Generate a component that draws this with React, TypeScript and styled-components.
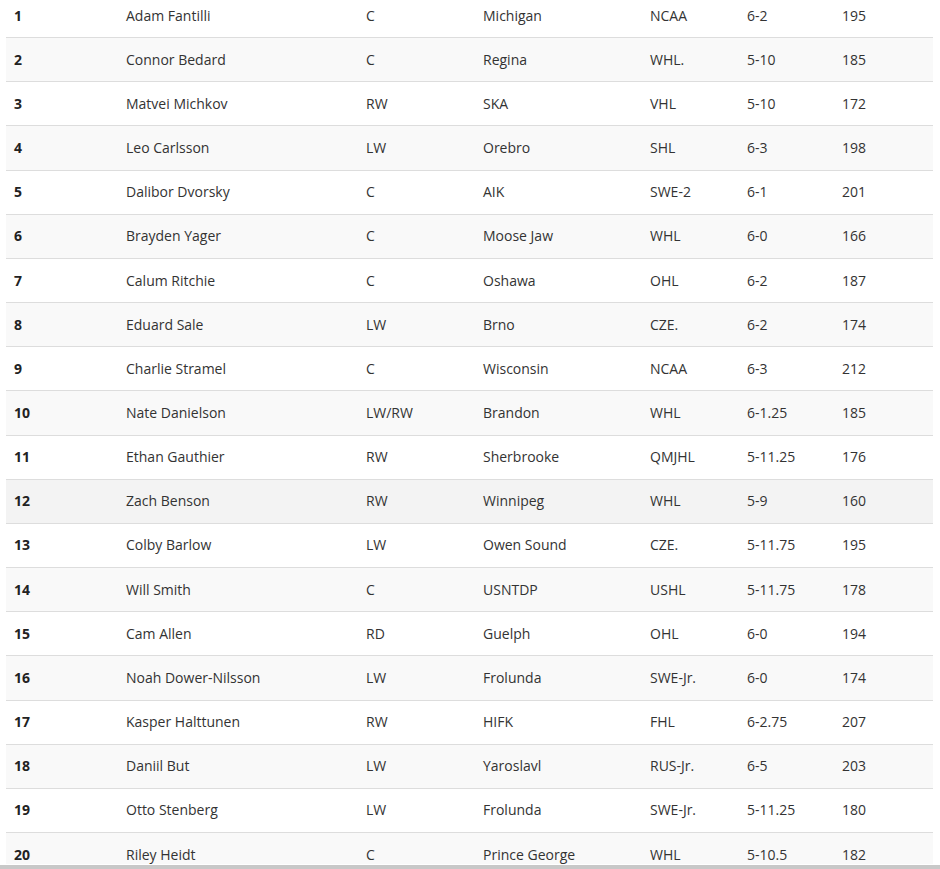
import styled, { createGlobalStyle } from 'styled-components';

const GlobalStyle = createGlobalStyle`
	html, body {
		margin: 0;
		padding: 0;
		background: #fff;
		overflow: hidden;
	}
	body {
		font-family: "Open Sans", "Liberation Sans", sans-serif;
		font-size: 14px;
		color: #333;
	}
`;

const Page = styled.div`
	height: 100vh;
	display: flex;
	flex-direction: column;
`;

const Viewport = styled.div`
	flex: 1;
	overflow: hidden;
	padding-left: 6px;
`;

const Table = styled.div`
	width: 927px;
	margin-top: -7px;
`;

const Row = styled.div<{ $striped: boolean; $hover?: boolean }>`
	display: grid;
	grid-template-columns: 112px 240px 117px 167px 97px 95px 99px;
	height: 44.16px;
	box-sizing: border-box;
	border-top: 1px solid #ddd;
	align-items: center;
	background: ${({ $striped, $hover }) => ($hover ? '#f3f3f3' : $striped ? '#f9f9f9' : '#fff')};
`;

const Cell = styled.div<{ $bold?: boolean }>`
	padding: 0 8px;
	line-height: 20px;
	white-space: nowrap;
	font-weight: ${({ $bold }) => ($bold ? 700 : 400)};
	color: ${({ $bold }) => ($bold ? '#222' : '#333')};
`;

const BottomBar = styled.div`
	height: 4px;
	border-top: 1px solid #fff;
	background: #c8c8c8;
	flex-shrink: 0;
`;

const players: [string, string, string, string, string, string][] = [
	['Adam Fantilli', 'C', 'Michigan', 'NCAA', '6-2', '195'],
	['Connor Bedard', 'C', 'Regina', 'WHL.', '5-10', '185'],
	['Matvei Michkov', 'RW', 'SKA', 'VHL', '5-10', '172'],
	['Leo Carlsson', 'LW', 'Orebro', 'SHL', '6-3', '198'],
	['Dalibor Dvorsky', 'C', 'AIK', 'SWE-2', '6-1', '201'],
	['Brayden Yager', 'C', 'Moose Jaw', 'WHL', '6-0', '166'],
	['Calum Ritchie', 'C', 'Oshawa', 'OHL', '6-2', '187'],
	['Eduard Sale', 'LW', 'Brno', 'CZE.', '6-2', '174'],
	['Charlie Stramel', 'C', 'Wisconsin', 'NCAA', '6-3', '212'],
	['Nate Danielson', 'LW/RW', 'Brandon', 'WHL', '6-1.25', '185'],
	['Ethan Gauthier', 'RW', 'Sherbrooke', 'QMJHL', '5-11.25', '176'],
	['Zach Benson', 'RW', 'Winnipeg', 'WHL', '5-9', '160'],
	['Colby Barlow', 'LW', 'Owen Sound', 'CZE.', '5-11.75', '195'],
	['Will Smith', 'C', 'USNTDP', 'USHL', '5-11.75', '178'],
	['Cam Allen', 'RD', 'Guelph', 'OHL', '6-0', '194'],
	['Noah Dower-Nilsson', 'LW', 'Frolunda', 'SWE-Jr.', '6-0', '174'],
	['Kasper Halttunen', 'RW', 'HIFK', 'FHL', '6-2.75', '207'],
	['Daniil But', 'LW', 'Yaroslavl', 'RUS-Jr.', '6-5', '203'],
	['Otto Stenberg', 'LW', 'Frolunda', 'SWE-Jr.', '5-11.25', '180'],
	['Riley Heidt', 'C', 'Prince George', 'WHL', '5-10.5', '182'],
];

const App = () => {
	return (
		<Page>
			<GlobalStyle />
			<Viewport>
				<Table>
					{players.map((p, i) => (
						<Row key={p[0]} $striped={i % 2 === 1} $hover={i === 11}>
							<Cell $bold>{i + 1}</Cell>
							{p.map((v, j) => (
								<Cell key={j}>{v}</Cell>
							))}
						</Row>
					))}
				</Table>
			</Viewport>
			<BottomBar />
		</Page>
	);
};

export default App;
